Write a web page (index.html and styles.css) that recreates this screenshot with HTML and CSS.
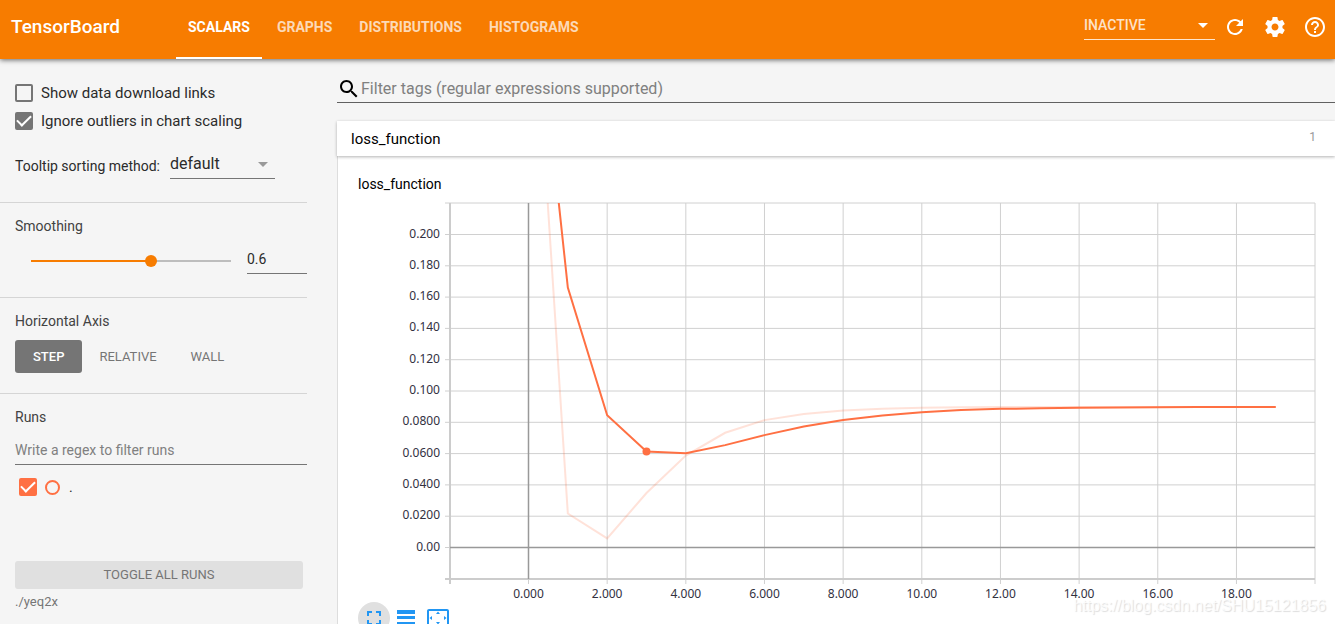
FILE: index.html
```html
<!DOCTYPE html>
<html lang="en">
<head>
<meta charset="utf-8">
<title>TensorBoard</title>
<link rel="stylesheet" href="styles.css">
</head>
<body>
<header class="toolbar">
  <h1 class="brand">TensorBoard</h1>
  <nav class="tabs">
    <a class="tab active" href="#scalars">SCALARS</a>
    <a class="tab" href="#graphs">GRAPHS</a>
    <a class="tab" href="#distributions">DISTRIBUTIONS</a>
    <a class="tab" href="#histograms">HISTOGRAMS</a>
  </nav>
  <div class="actions">
    <div class="picker inactive-picker">
      <select aria-label="Inactive dashboards"><option>INACTIVE</option></select>
    </div>
    <button class="icon-button" aria-label="Reload"><svg viewBox="0 0 24 24"><path d="M17.65 6.35C16.2 4.9 14.21 4 12 4c-4.42 0-7.99 3.58-7.99 8s3.57 8 7.99 8c3.73 0 6.84-2.55 7.73-6h-2.08c-.82 2.33-3.04 4-5.65 4-3.31 0-6-2.69-6-6s2.69-6 6-6c1.66 0 3.14.69 4.22 1.78L13 11h7V4l-2.35 2.35z"/></svg></button>
    <button class="icon-button" aria-label="Settings"><svg viewBox="0 0 24 24"><path d="M19.43 12.98c.04-.32.07-.64.07-.98s-.03-.66-.07-.98l2.11-1.65c.19-.15.24-.42.12-.64l-2-3.46c-.12-.22-.39-.3-.61-.22l-2.49 1c-.52-.4-1.08-.73-1.69-.98l-.38-2.65C14.46 2.18 14.25 2 14 2h-4c-.25 0-.46.18-.49.42l-.38 2.65c-.61.25-1.17.59-1.69.98l-2.49-1c-.23-.09-.49 0-.61.22l-2 3.46c-.13.22-.07.49.12.64l2.11 1.65c-.04.32-.07.65-.07.98s.03.66.07.98l-2.11 1.65c-.19.15-.24.42-.12.64l2 3.46c.12.22.39.3.61.22l2.49-1c.52.4 1.08.73 1.69.98l.38 2.65c.03.24.24.42.49.42h4c.25 0 .46-.18.49-.42l.38-2.65c.61-.25 1.17-.59 1.69-.98l2.49 1c.23.09.49 0 .61-.22l2-3.46c.12-.22.07-.49-.12-.64l-2.11-1.65zM12 15.5c-1.93 0-3.5-1.57-3.5-3.5s1.57-3.5 3.5-3.5 3.5 1.57 3.5 3.5-1.57 3.5-3.5 3.5z"/></svg></button>
    <button class="icon-button" aria-label="Help"><svg viewBox="0 0 24 24"><path d="M11 18h2v-2h-2v2zm1-16C6.48 2 2 6.48 2 12s4.48 10 10 10 10-4.48 10-10S17.52 2 12 2zm0 18c-4.41 0-8-3.59-8-8s3.59-8 8-8 8 3.59 8 8-3.59 8-8 8zm0-14c-2.21 0-4 1.79-4 4h2c0-1.1.9-2 2-2s2 .9 2 2c0 2-3 1.75-3 5h2c0-2.25 3-2.5 3-5 0-2.21-1.79-4-4-4z"/></svg></button>
  </div>
</header>

<div class="content">
  <aside class="sidebar">
    <section class="group options">
      <label class="check-row"><input class="check" type="checkbox">Show data download links</label>
      <label class="check-row"><input class="check" type="checkbox" checked>Ignore outliers in chart scaling</label>
      <div class="sort-row">
        <label for="sort">Tooltip sorting method:</label>
        <div class="picker sort-picker"><select id="sort"><option>default</option></select></div>
      </div>
    </section>
    <section class="group">
      <h2 class="group-title" id="smoothing">Smoothing</h2>
      <div class="slider-row">
        <input class="slider" type="range" min="0" max="1" step="0.1" value="0.6" aria-labelledby="smoothing">
        <input class="line-input number" type="text" value="0.6" aria-labelledby="smoothing">
      </div>
    </section>
    <section class="group axis">
      <h2 class="group-title">Horizontal Axis</h2>
      <div class="axis-row">
        <button class="axis-button selected">STEP</button>
        <button class="axis-button">RELATIVE</button>
        <button class="axis-button">WALL</button>
      </div>
    </section>
    <section class="group runs">
      <h2 class="group-title">Runs</h2>
      <input class="line-input regex" type="text" placeholder="Write a regex to filter runs" aria-label="Filter runs">
      <div class="run-row">
        <input class="check run-check" id="run" type="checkbox" checked>
        <input class="run-radio" type="radio" aria-label="Only this run">
        <label for="run">.</label>
      </div>
      <button class="toggle-all">TOGGLE ALL RUNS</button>
      <p class="logdir">./yeq2x</p>
    </section>
  </aside>

  <main class="main">
    <div class="filter">
      <svg class="search-icon" viewBox="0 0 24 24"><path d="M15.5 14h-.79l-.28-.27C15.41 12.59 16 11.11 16 9.5 16 5.91 13.09 3 9.5 3S3 5.91 3 9.5 5.91 16 9.5 16c1.61 0 3.09-.59 4.23-1.57l.27.28v.79l5 4.99L20.49 19l-4.99-5zm-6 0C7.01 14 5 11.99 5 9.5S7.01 5 9.5 5 14 7.01 14 9.5 11.99 14 9.5 14z"/></svg>
      <input class="filter-input" type="text" placeholder="Filter tags (regular expressions supported)" aria-label="Filter tags">
    </div>
    <button class="pane-header"><span>loss_function</span><span class="count">1</span></button>
    <section class="pane">
      <h3 class="chart-title">loss_function</h3>
      <svg class="chart" id="chart" viewBox="0 0 958 404" role="img" aria-label="loss_function by step"></svg>
      <div class="chart-tools">
        <button class="tool round" aria-label="Fullscreen"><svg viewBox="0 0 24 24"><path d="M7 14H5v5h5v-2H7v-3zm-2-4h2V7h3V5H5v5zm12 7h-3v2h5v-5h-2v3zM14 5v2h3v3h2V5h-5z"/></svg></button>
        <button class="tool" aria-label="Toggle log scale"><svg viewBox="0 0 24 24"><path d="M3 4h18v4H3zM3 10h18v3H3zM3 16h18v3H3z"/></svg></button>
        <button class="tool" aria-label="Fit domain to data"><svg viewBox="0 0 24 24"><path d="M12 5.500L10 8h4l-2-2.500zM18 10v4l2.500-2L18 10zM6 10l-2.500 2L6 14v-4zM14 16h-4l2 2.500 2-2.500zM21 3H3c-1.100 0-2 .9-2 2v14c0 1.100.9 2 2 2h18c1.100 0 2-.9 2-2V5c0-1.100-.9-2-2-2zm0 16H3V5h18v14z"/></svg></button>
      </div>
    </section>
  </main>
</div>
<div class="watermark">https://blog.csdn.net/SHU15121856</div>
<script src="chart.js"></script>
</body>
</html>
```
FILE: styles.css
```css
* { box-sizing: border-box; }

body {
  margin: 0;
  height: 100vh;
  overflow: hidden;
  display: flex;
  flex-direction: column;
  background: #f5f5f5;
  color: #2b2b2b;
  font: 14px/20px Roboto, sans-serif;
}

h1, h2, h3, p { margin: 0; font-weight: 400; }
button, input, select { font: inherit; color: inherit; }
button { border: 0; padding: 0; background: none; }
input, select { margin: 0; outline: 0; }
svg { display: block; }

.toolbar {
  position: relative;
  flex: none;
  display: flex;
  align-items: stretch;
  height: 59px;
  padding-left: 11px;
  background: #f77c00;
  color: #fff;
  box-shadow: 0 1px 5px rgba(0, 0, 0, 0.6);
}
.brand {
  flex: none;
  width: 165px;
  padding-bottom: 5px;
  align-self: center;
  font-size: 19px;
  font-weight: 500;
}
.tabs { display: flex; gap: 3px; }
.tab {
  display: flex;
  align-items: center;
  padding: 1px 12px 4px;
  border-bottom: 2px solid transparent;
  color: rgba(255, 255, 255, 0.72);
  font-weight: 700;
  text-decoration: none;
}
.tab.active { color: #fff; border-bottom-color: #fff; }
.actions {
  display: flex;
  align-items: center;
  margin-left: auto;
  padding-bottom: 5px;
}

.picker {
  position: relative;
  border-bottom: 1px solid #757575;
}
.picker select {
  width: 100%;
  height: 29px;
  padding: 0;
  border: 0;
  background: none;
  appearance: none;
}
.picker::after {
  content: "";
  position: absolute;
  right: 7px;
  top: 13px;
  border: 5px solid transparent;
  border-top-color: #999;
  border-bottom: 0;
  pointer-events: none;
}
.inactive-picker {
  width: 131px;
  margin-bottom: 4px;
  border-color: rgba(255, 255, 255, 0.8);
  color: rgba(255, 255, 255, 0.8);
  font-weight: 500;
}
.inactive-picker::after { border-top-color: #fff; }
.icon-button {
  width: 40px;
  height: 40px;
  padding: 8px;
}
.icon-button svg { width: 24px; height: 24px; fill: #fff; }

.content { flex: 1; display: flex; min-height: 0; }

.sidebar { flex: none; width: 337px; padding-right: 30px; }
.group {
  padding: 13px 0 23px 15px;
  border-bottom: 1px solid #d5d5d5;
}
.options { padding-top: 20px; }
.axis { padding-bottom: 20px; }
.runs { border-bottom: 0; }
.group-title { font-size: 14px; line-height: 20px; color: #424242; }

.check-row {
  display: flex;
  align-items: center;
  gap: 8px;
  height: 28px;
  font-size: 15px;
}
.check {
  flex: none;
  display: grid;
  place-content: center;
  width: 18px;
  height: 18px;
  border: 2px solid #757575;
  border-radius: 2px;
  appearance: none;
}
.check:checked { background: #757575; }
.check:checked::after {
  content: "";
  width: 6px;
  height: 12px;
  margin-bottom: 4px;
  border: solid #fff;
  border-width: 0 2px 2px 0;
  transform: rotate(45deg);
}
.sort-row {
  display: flex;
  align-items: center;
  gap: 10px;
  height: 30px;
  margin-top: 14px;
}
.sort-row label { padding-top: 4px; }
.sort-picker { width: 105px; font-size: 16px; }

.slider-row {
  display: flex;
  align-items: center;
  justify-content: space-between;
  margin-top: 8px;
  padding-left: 10px;
}
.slider {
  width: 212px;
  height: 12px;
  margin-top: 4px;
  appearance: none;
  background: none;
}
.slider::-webkit-slider-runnable-track {
  height: 12px;
  background:
    linear-gradient(to right, transparent 6px, #f77c00 6px 126px, #bdbdbd 126px 206px, transparent 206px)
    center / 100% 2px no-repeat;
}
.slider::-webkit-slider-thumb {
  width: 12px;
  height: 12px;
  border-radius: 50%;
  background: #f77c00;
  appearance: none;
}
.line-input {
  height: 30px;
  padding: 0;
  border: 0;
  border-bottom: 1px solid #757575;
  background: none;
}
.number { width: 60px; }
.regex { display: block; width: 100%; margin-top: 8px; }
.regex::placeholder, .filter-input::placeholder { color: #808080; opacity: 1; }

.axis-row { display: flex; margin-top: 9px; }
.axis-button {
  height: 33px;
  padding: 0 17px;
  border-radius: 3px;
  color: #757575;
  font-size: 13px;
}
.axis-button.selected {
  padding: 0 18px;
  background: #757575;
  color: #fff;
  font-weight: 500;
}

.run-row {
  display: flex;
  align-items: center;
  height: 28px;
  margin-top: 8px;
  padding-left: 4px;
}
.run-check { border-color: #ff7043; }
.run-check:checked { background: #ff7043; }
.run-radio {
  width: 15px;
  height: 15px;
  margin: 0 9px 0 8px;
  border: 2px solid #ff7043;
  border-radius: 50%;
  appearance: none;
}
.toggle-all {
  display: block;
  width: 288px;
  height: 28px;
  margin-top: 60px;
  border-radius: 3px;
  background: #e0e0e0;
  color: #757575;
  font-size: 13px;
}
.logdir { margin-top: 3px; font-size: 13px; color: #757575; }

.main { flex: 1; min-width: 0; padding-top: 16px; }
.filter {
  display: flex;
  align-items: center;
  height: 28px;
  border-bottom: 1px solid #616161;
}
.search-icon { flex: none; width: 24px; height: 24px; fill: #000; }
.filter-input {
  flex: 1;
  height: 26px;
  padding: 0;
  border: 0;
  background: none;
  font-size: 16px;
}
.pane-header {
  position: relative;
  display: flex;
  align-items: center;
  justify-content: space-between;
  width: 100%;
  height: 35px;
  margin-top: 18px;
  padding: 0 19px 0 14px;
  background: #fff;
  color: #000;
  box-shadow: 0 1px 3px rgba(0, 0, 0, 0.3);
  font-size: 15px;
}
.count { padding-bottom: 3px; font-size: 12px; color: #999; }
.pane {
  padding: 18px 19px 16px 20px;
  border-left: 1px solid #ddd;
  background: #fff;
}
.chart-title { color: #000; font-size: 14px; line-height: 20px; }
.chart { width: 100%; margin-top: 4px; overflow: visible; }
.grid { stroke: #d0d0d0; stroke-width: 1; }
.edge { stroke: #ccc; stroke-width: 2; }
.zero { stroke: #999; stroke-width: 1.5; }
.tick-label { fill: #32313f; font: 12px "Noto Sans", sans-serif; }
.tick-x { text-anchor: middle; }
.tick-y { text-anchor: end; }
.line { fill: none; stroke: #ff7043; stroke-width: 2; }
.raw { opacity: 0.2; }
.point { fill: #ff7043; }

.chart-tools { display: flex; }
.tool { width: 32px; height: 32px; padding: 4px; border-radius: 50%; }
.tool.round { background: #e0e0e0; }
.tool svg { width: 24px; height: 24px; fill: #2196f3; }

.watermark {
  position: absolute;
  right: 9px;
  bottom: 8px;
  color: rgba(255, 255, 255, 0.8);
  font: 16px/20px "Liberation Sans", sans-serif;
  text-shadow: 1px 1px 1px #ddd;
  pointer-events: none;
}
```
FILE: chart.js
```js
const svg = document.getElementById('chart');
const plot = { left: 92, right: 957, top: 5, bottom: 381 };
const x = step => 170.5 + step * 39.33;
const y = value => 349.5 - value * 1565;

function add(tag, attrs, parent = svg) {
  const el = document.createElementNS('http://www.w3.org/2000/svg', tag);
  for (const key in attrs) el.setAttribute(key, attrs[key]);
  parent.appendChild(el);
  return el;
}
function rule(x1, y1, x2, y2, cls) {
  add('line', { x1, y1, x2, y2, class: cls });
}

for (let i = 0; i <= 10; i++) {
  const value = i * 0.02;
  rule(plot.left - 5, y(value), plot.right, y(value), 'grid');
  const digits = i === 0 ? 2 : i < 5 ? 4 : 3;
  add('text', { x: 82, y: y(value) + 3, class: 'tick-label tick-y' }).textContent = value.toFixed(digits);
}
for (let step = 0; step <= 18; step += 2) {
  rule(x(step), plot.top, x(step), plot.bottom + 5, 'grid');
  add('text', { x: x(step), y: 400, class: 'tick-label tick-x' }).textContent = step.toFixed(step < 10 ? 3 : 2);
}
rule(plot.left - 5, plot.top, plot.right, plot.top, 'grid');
rule(plot.right, plot.top, plot.right, plot.bottom + 5, 'grid');
rule(plot.left, plot.top, plot.left, plot.bottom + 5, 'edge');
rule(plot.left - 5, plot.bottom, plot.right, plot.bottom, 'edge');
rule(plot.left, y(0), plot.right, y(0), 'zero');
rule(x(0), plot.top, x(0), plot.bottom, 'zero');

const clip = add('clipPath', { id: 'plot-area' });
add('rect', { x: plot.left, y: plot.top, width: plot.right - plot.left, height: plot.bottom - plot.top }, clip);
const lines = add('g', { 'clip-path': 'url(#plot-area)' });

const raw = [0.41, 0.0217, 0.0058, 0.0348, 0.0587, 0.0733, 0.0814, 0.0853, 0.0875, 0.0887,
  0.0893, 0.0896, 0.0897, 0.0898, 0.0898, 0.0898, 0.0898, 0.0898, 0.0898, 0.0898];
const smoothed = [0.401, 0.1661, 0.0845, 0.0614, 0.0602, 0.0654, 0.0718, 0.0773, 0.0814, 0.0843,
  0.0864, 0.0878, 0.0886, 0.0889, 0.0893, 0.0895, 0.0896, 0.0898, 0.0898, 0.0898];
const points = values => values.map((v, i) => `${x(i)},${y(v)}`).join(' ');
add('polyline', { points: points(raw), class: 'line raw' }, lines);
add('polyline', { points: points(smoothed), class: 'line' }, lines);
add('circle', { cx: x(3), cy: y(smoothed[3]), r: 4, class: 'point' });
```
